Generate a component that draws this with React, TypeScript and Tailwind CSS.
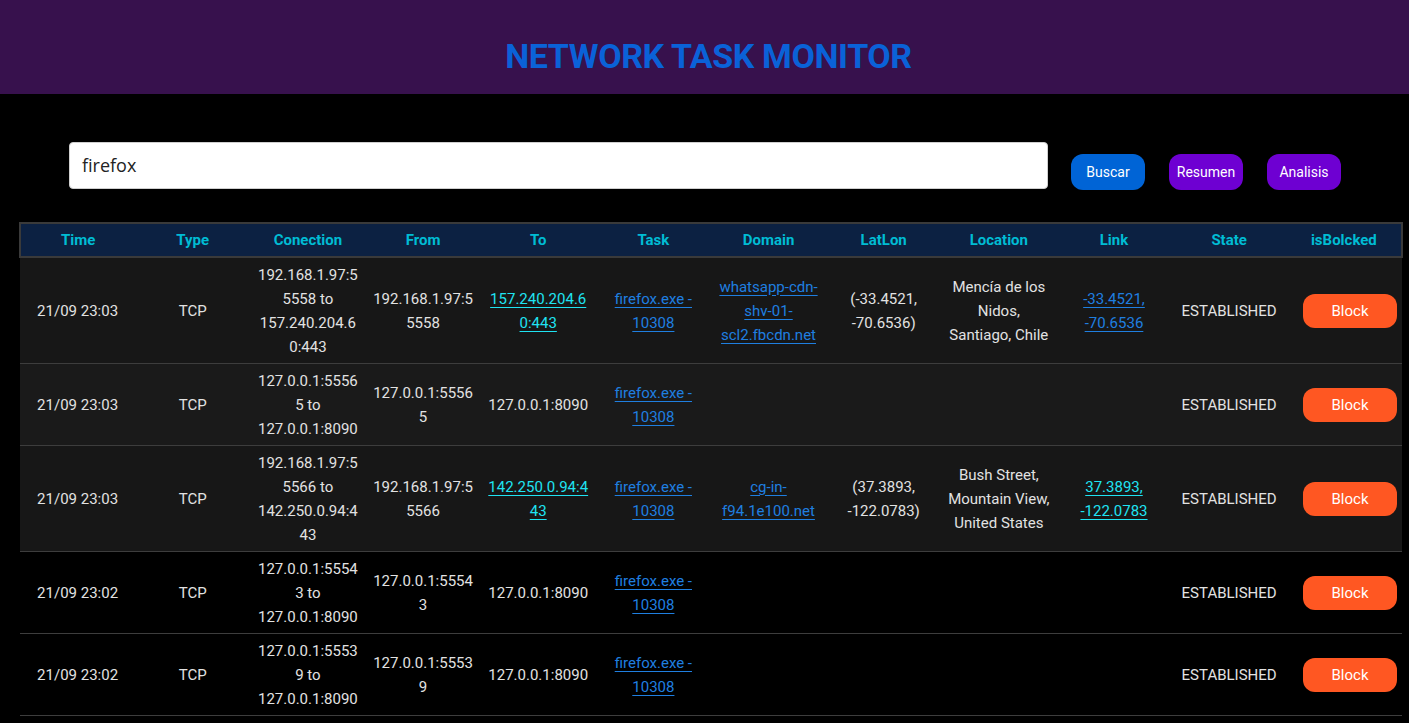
import React from "react";

type Cell = { lines: string[]; kind?: "text" | "cyan" | "blue" };

type Row = {
  time: string;
  type: string;
  conn: string[];
  from: string[];
  to: Cell;
  task: string[];
  domain: string[];
  latlon: string[];
  location: string[];
  link: Cell;
  state: string;
  bg: string;
};

const task = ["firefox.exe -", "10308"];

const rows: Row[] = [
  {
    time: "21/09 23:03",
    type: "TCP",
    conn: ["192.168.1.97:5", "5558 to", "157.240.204.6", "0:443"],
    from: ["192.168.1.97:5", "5558"],
    to: { lines: ["157.240.204.6", "0:443"], kind: "cyan" },
    task,
    domain: ["whatsapp-cdn-", "shv-01-", "scl2.fbcdn.net"],
    latlon: ["(-33.4521,", "-70.6536)"],
    location: ["Mencía de los", "Nidos,", "Santiago, Chile"],
    link: { lines: ["-33.4521,", "-70.6536"], kind: "blue" },
    state: "ESTABLISHED",
    bg: "bg-[#171717]",
  },
  {
    time: "21/09 23:03",
    type: "TCP",
    conn: ["127.0.0.1:5556", "5 to", "127.0.0.1:8090"],
    from: ["127.0.0.1:5556", "5"],
    to: { lines: ["127.0.0.1:8090"], kind: "text" },
    task,
    domain: [],
    latlon: [],
    location: [],
    link: { lines: [], kind: "text" },
    state: "ESTABLISHED",
    bg: "bg-[#1a1a1a]",
  },
  {
    time: "21/09 23:03",
    type: "TCP",
    conn: ["192.168.1.97:5", "5566 to", "142.250.0.94:4", "43"],
    from: ["192.168.1.97:5", "5566"],
    to: { lines: ["142.250.0.94:4", "43"], kind: "cyan" },
    task,
    domain: ["cg-in-", "f94.1e100.net"],
    latlon: ["(37.3893,", "-122.0783)"],
    location: ["Bush Street,", "Mountain View,", "United States"],
    link: { lines: ["37.3893,", "-122.0783"], kind: "cyan" },
    state: "ESTABLISHED",
    bg: "bg-[#171717]",
  },
  {
    time: "21/09 23:02",
    type: "TCP",
    conn: ["127.0.0.1:5554", "3 to", "127.0.0.1:8090"],
    from: ["127.0.0.1:5554", "3"],
    to: { lines: ["127.0.0.1:8090"], kind: "text" },
    task,
    domain: [],
    latlon: [],
    location: [],
    link: { lines: [], kind: "text" },
    state: "ESTABLISHED",
    bg: "bg-black",
  },
  {
    time: "21/09 23:02",
    type: "TCP",
    conn: ["127.0.0.1:5553", "9 to", "127.0.0.1:8090"],
    from: ["127.0.0.1:5553", "9"],
    to: { lines: ["127.0.0.1:8090"], kind: "text" },
    task,
    domain: [],
    latlon: [],
    location: [],
    link: { lines: [], kind: "text" },
    state: "ESTABLISHED",
    bg: "bg-black",
  },
];

const headers = [
  "Time",
  "Type",
  "Conection",
  "From",
  "To",
  "Task",
  "Domain",
  "LatLon",
  "Location",
  "Link",
  "State",
  "isBolcked",
];

function Lines({ lines }: { lines: string[] }) {
  return (
    <>
      {lines.map((l, i) => (
        <React.Fragment key={i}>
          {i > 0 && <br />}
          {l}
        </React.Fragment>
      ))}
    </>
  );
}

function LinkLines({ lines, kind }: { lines: string[]; kind: "cyan" | "blue" }) {
  const color =
    kind === "cyan"
      ? "text-[#1fe3f2] decoration-[#1fe3f2]"
      : "text-[#1f7fe0] decoration-[#1f7fe0]";
  return (
    <a href="#" className={`underline underline-offset-[3px] ${color}`}>
      <Lines lines={lines} />
    </a>
  );
}

function Td({ children }: { children?: React.ReactNode }) {
  return (
    <td className="px-1 py-[4.5px] text-center align-middle whitespace-nowrap">
      {children}
    </td>
  );
}

export default function App() {
  const font = { fontFamily: "Roboto, 'Noto Sans', sans-serif" };
  return (
    <div className="min-h-screen bg-black" style={font}>
      <header className="h-[94px] bg-[#37114d] flex items-center justify-center">
        <h1 className="text-[34px] font-bold text-[#0a62d8] tracking-[-0.4px] pt-[18px] pl-[8px]">
          NETWORK TASK MONITOR
        </h1>
      </header>

      <div className="flex items-end pl-[69px] pt-[48px]">
        <div
          className="w-[979px] h-[47px] bg-white rounded-[4px] border border-[#cfcfcf] flex items-center pl-[12px] text-[18px] text-[#222]"
          style={{ fontFamily: "'Open Sans', 'Noto Sans', sans-serif" }}
        >
          firefox
        </div>
        <div className="flex gap-[24px] ml-[23px] mb-[-1px]">
          <button className="w-[74px] h-[36px] rounded-[12px] bg-[#0064d6] text-white text-[14px]">
            Buscar
          </button>
          <button className="w-[74px] h-[36px] rounded-[12px] bg-[#6e00d2] text-white text-[14px]">
            Resumen
          </button>
          <button className="w-[74px] h-[36px] rounded-[12px] bg-[#6e00d2] text-white text-[14px]">
            Analisis
          </button>
        </div>
      </div>

      <div className="pl-[19px] pt-[33px]">
        <table className="w-[1384px] table-fixed border-collapse text-[15px] leading-[24px] text-[#e2e2e2]">
          <thead>
            <tr className="bg-[#0c2142] border-2 border-[#3a3a3a] h-[34px]">
              {headers.map((h) => (
                <th
                  key={h}
                  className="font-bold text-[15px] text-[#00bcd4] text-center align-middle"
                >
                  {h}
                </th>
              ))}
            </tr>
          </thead>
          <tbody>
            {rows.map((r, i) => (
              <tr key={i} className={`${r.bg} border-b border-[#3d3d3d]`}>
                <Td>{r.time}</Td>
                <Td>{r.type}</Td>
                <Td>
                  <Lines lines={r.conn} />
                </Td>
                <Td>
                  <Lines lines={r.from} />
                </Td>
                <Td>
                  {r.to.kind === "text" ? (
                    <Lines lines={r.to.lines} />
                  ) : (
                    <LinkLines lines={r.to.lines} kind={r.to.kind as "cyan" | "blue"} />
                  )}
                </Td>
                <Td>
                  <LinkLines lines={r.task} kind="blue" />
                </Td>
                <Td>
                  {r.domain.length > 0 && <LinkLines lines={r.domain} kind="blue" />}
                </Td>
                <Td>
                  <Lines lines={r.latlon} />
                </Td>
                <Td>
                  <Lines lines={r.location} />
                </Td>
                <Td>
                  {r.link.lines.length > 0 && (
                    <LinkLines lines={r.link.lines} kind={r.link.kind as "cyan" | "blue"} />
                  )}
                </Td>
                <Td>{r.state}</Td>
                <td className="py-[4.5px] align-middle">
                  <div className="flex justify-end pr-[5px]">
                    <button className="w-[94px] h-[34px] rounded-[12px] bg-[#ff5722] text-white text-[15px]">
                      Block
                    </button>
                  </div>
                </td>
              </tr>
            ))}
          </tbody>
        </table>
      </div>
    </div>
  );
}
